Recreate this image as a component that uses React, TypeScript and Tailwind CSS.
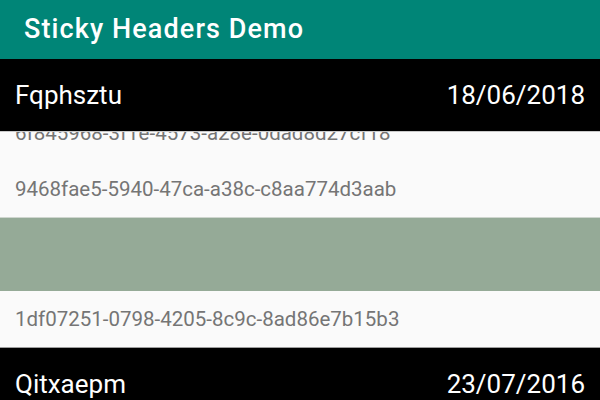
export default function App() {
  const font = { fontFamily: "Roboto, 'Liberation Sans', sans-serif" };
  return (
    <div className="w-[600px] h-[400px] overflow-hidden flex flex-col bg-[#fafafa]" style={font}>
      <div className="h-[59px] shrink-0 bg-[#008577] flex items-center px-[24px]">
        <span className="text-white text-[27px] font-medium leading-none tracking-[1.1px]">Sticky Headers Demo</span>
      </div>
      <div className="relative flex-1 overflow-hidden">
        <div className="absolute top-0 left-0 right-0 z-10">
          <div className="h-[72px] bg-black flex items-center justify-between px-[15px] text-white text-[26px] leading-none">
            <span>Fqphsztu</span>
            <span>18/06/2018</span>
          </div>
          <div className="h-px bg-[#c9c9c9]" />
        </div>
        <div className="pt-[46px] flex flex-col">
          <div className="h-[56px] flex items-center px-[15px] text-[20.5px] text-[#757575]">
            6f845968-3f1e-4573-a28e-0dad8d27cf18
          </div>
          <div className="h-[56px] flex items-center px-[15px] text-[20.5px] text-[#757575]">
            9468fae5-5940-47ca-a38c-c8aa774d3aab
          </div>
          <div className="h-px bg-[#cfd6cf]" />
          <div className="h-[73px] bg-[#95aa97]" />
          <div className="h-[56px] flex items-center px-[15px] text-[20.5px] text-[#757575]">
            1df07251-0798-4205-8c9c-8ad86e7b15b3
          </div>
          <div className="h-px bg-[#9e9e9e]" />
          <div className="h-[72px] bg-black flex items-center justify-between px-[15px] text-white text-[26px] leading-none">
            <span>Qitxaepm</span>
            <span>23/07/2016</span>
          </div>
        </div>
      </div>
    </div>
  );
}
